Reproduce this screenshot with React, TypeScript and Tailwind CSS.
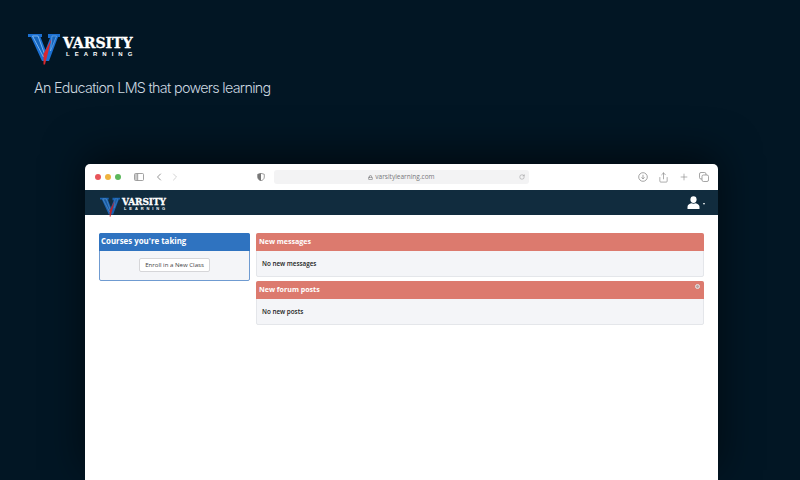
import { ChevronLeft, ChevronRight, Lock, Plus, RotateCw, Share } from "lucide-react";

function VMark({ className }: { className: string }) {
  return (
    <svg viewBox="0 0 32 32" className={className}>
      <path d="M0 1H14V4H12.500L17.500 17 22 5H20V1H32V4H30L21 28H14L3 4H0z" fill="#1b70d2" />
      <path d="M4.500 3H10L16.500 21 15.500 24z" fill="#1565bd" stroke="#8fc3f3" strokeWidth="0.8" />
      <path d="M24 3H28.500L22.500 18z" fill="#1565bd" stroke="#8fc3f3" strokeWidth="0.5" />
      <path d="M23.500 6 17 31.500H15.500V21z" fill="#d9282f" />
    </svg>
  );
}

function Wordmark({ big }: { big?: boolean }) {
  return (
    <div className={`flex flex-col items-start text-white ${big ? "mb-[3px]" : "mt-[5px]"}`}>
      <span
        className={`font-['DejaVu_Serif',serif] font-bold [-webkit-text-stroke:0.3px_white] ${
          big ? "text-[14.200px] leading-[13px] tracking-[-0.1px]" : "text-[9px] leading-[8px] tracking-[-0.1px]"
        }`}
      >
        VARSITY
      </span>
      <span
        className={`font-['Liberation_Sans',sans-serif] font-bold ${
          big ? "pl-[3px] text-[6px] leading-[9px] tracking-[5px]" : "pl-[2px] text-[4px] leading-[6px] tracking-[2.900px]"
        }`}
      >
        LEARNING
      </span>
    </div>
  );
}

function Panel({ title, text, gear }: { title: string; text: string; gear?: boolean }) {
  return (
    <div className="rounded-[2px] border border-[#e4e6ea] bg-[#f4f5f8]">
      <div className="relative -mx-px -mt-px flex h-[18px] items-center rounded-t-[2px] bg-[#dc7a6e] px-[3px] pb-[1px] text-[7.100px] font-bold text-white">
        {title}
        {gear && <span className="absolute right-[4px] top-[3px] h-[5px] w-[5px] rounded-full border border-[#e8e4e4] bg-[#b9a5a3]" />}
      </div>
      <div className="flex h-[25px] items-center px-[5px] text-[6.300px] font-semibold text-[#1c1c1c]">{text}</div>
    </div>
  );
}

export default function App() {
  return (
    <div className="flex h-[480px] w-[800px] flex-col overflow-hidden bg-[#021624] font-['Open_Sans',sans-serif]">
      {/* heading */}
      <div className="px-[28px] pt-[33px]">
        <div className="flex items-center gap-[3px]">
          <VMark className="h-[32px] w-[32px]" />
          <Wordmark big />
        </div>
        <p className="mt-[14px] pl-[6px] font-['Inter',sans-serif] text-[14.300px] leading-[18px] font-light tracking-[-0.68px] text-[#ccd8e0]">
          An Education LMS that powers learning
        </p>
      </div>

      {/* browser window */}
      <div className="mt-[67px] ml-[85px] flex w-[633px] flex-1 flex-col overflow-hidden rounded-t-[5px] bg-white shadow-[0_-10px_40px_rgba(0,0,0,0.55)]">
        <div className="flex h-[26px] shrink-0 items-center text-[#808080]">
          <div className="ml-[10px] flex gap-[4px]">
            <span className="h-[6px] w-[6px] rounded-full bg-[#e8555a]" />
            <span className="h-[6px] w-[6px] rounded-full bg-[#efb33f]" />
            <span className="h-[6px] w-[6px] rounded-full bg-[#5cb85c]" />
          </div>
          <svg viewBox="0 0 10 8" className="ml-[13px] h-[8px] w-[10px]" fill="none" stroke="#8a8a8a" strokeWidth="0.8">
            <rect x="0.500" y="0.500" width="9" height="7" rx="1" />
            <rect x="1" y="1" width="2.500" height="6" fill="#c9c9c9" stroke="none" />
            <path d="M3.700 0.500v7" />
          </svg>
          <ChevronLeft className="ml-[9px] h-[12px] w-[12px] text-[#707070]" strokeWidth={1.5} />
          <ChevronRight className="ml-[4px] h-[12px] w-[12px] text-[#c4c4c4]" strokeWidth={1.5} />
          <svg viewBox="0 0 8 8" className="ml-[76px] h-[8px] w-[8px]">
            <path d="M4 .3 7.300 1.300V4c0 2-1.500 3.200-3.300 3.800C2.200 7.200.7 6 .7 4V1.300z" fill="#fff" stroke="#777" strokeWidth="0.7" />
            <path d="M4 .3V7.800C2.200 7.200.7 6 .7 4V1.300z" fill="#777" />
          </svg>
          <div className="ml-[9px] flex h-[14px] w-[255px] items-center rounded-[3px] bg-[#f3f3f4] pr-[4px] text-[6.500px] text-[#77777a]">
            <div className="flex flex-1 items-center justify-center gap-[2px] pl-[10px]">
              <Lock className="h-[5px] w-[5px]" strokeWidth={3} />
              <span>varsitylearning.com</span>
            </div>
            <RotateCw className="h-[6px] w-[6px]" strokeWidth={1.5} />
          </div>
          <div className="ml-auto mr-[9px] flex items-center gap-[10px]">
            <svg viewBox="0 0 10 10" className="h-[10px] w-[10px]" fill="none" stroke="#808080" strokeWidth="0.7">
              <circle cx="5" cy="5" r="4.300" />
              <path d="M5 2.800v4M3.500 5.400 5 6.900l1.500-1.500" />
            </svg>
            <Share className="h-[11px] w-[11px]" strokeWidth={1.4} />
            <Plus className="h-[10px] w-[10px]" strokeWidth={1.4} />
            <svg viewBox="0 0 10 10" className="h-[10px] w-[10px]" fill="#fff" stroke="#808080" strokeWidth="0.7">
              <rect x="0.500" y="0.500" width="6.500" height="6.500" rx="1.500" />
              <rect x="3" y="3" width="6.500" height="6.500" rx="1.500" />
            </svg>
          </div>
        </div>

        {/* app nav */}
        <div className="relative z-10 flex h-[25px] shrink-0 items-center justify-between bg-[#112c3e] pr-[13px] pl-[15px]">
          <div className="flex items-center gap-[2px]">
            <VMark className="mt-[8px] h-[20px] w-[20px] opacity-80" />
            <Wordmark />
          </div>
          <div className="flex items-center gap-[3px]">
            <svg viewBox="0 0 13 13" className="h-[13px] w-[13px]" fill="#fff">
              <ellipse cx="6.500" cy="3.600" rx="3.100" ry="3.400" />
              <path d="M0.500 13V10.800C0.500 8.800 2.500 7.600 4.300 7.200c1.300.6 3.100.6 4.400 0 1.800.4 3.800 1.600 3.800 3.600V13z" />
            </svg>
            <span className="mt-[2px] border-x-[1.500px] border-t-[2px] border-x-transparent border-t-white" />
          </div>
        </div>

        {/* dashboard */}
        <div className="flex items-start gap-[6px] px-[14px] pt-[18px]">
          <div className="w-[151px] shrink-0 rounded-[2px] border border-[#6f9bd1] bg-[#f4f5f8]">
            <div className="-mx-px -mt-px flex h-[18px] items-center rounded-t-[2px] bg-[#2f73c0] px-[2px] text-[7.900px] font-bold text-white">
              Courses you're taking
            </div>
            <div className="flex h-[29px] items-center justify-center pb-[1px]">
              <div className="flex h-[14px] w-[71px] items-center justify-center rounded-[2px] border border-[#d6d6d9] bg-white text-[6.100px] font-medium whitespace-nowrap text-[#444]">
                Enroll in a New Class
              </div>
            </div>
          </div>
          <div className="flex flex-1 flex-col gap-[4px]">
            <Panel title="New messages" text="No new messages" />
            <Panel title="New forum posts" text="No new posts" gear />
          </div>
        </div>
      </div>
    </div>
  );
}
